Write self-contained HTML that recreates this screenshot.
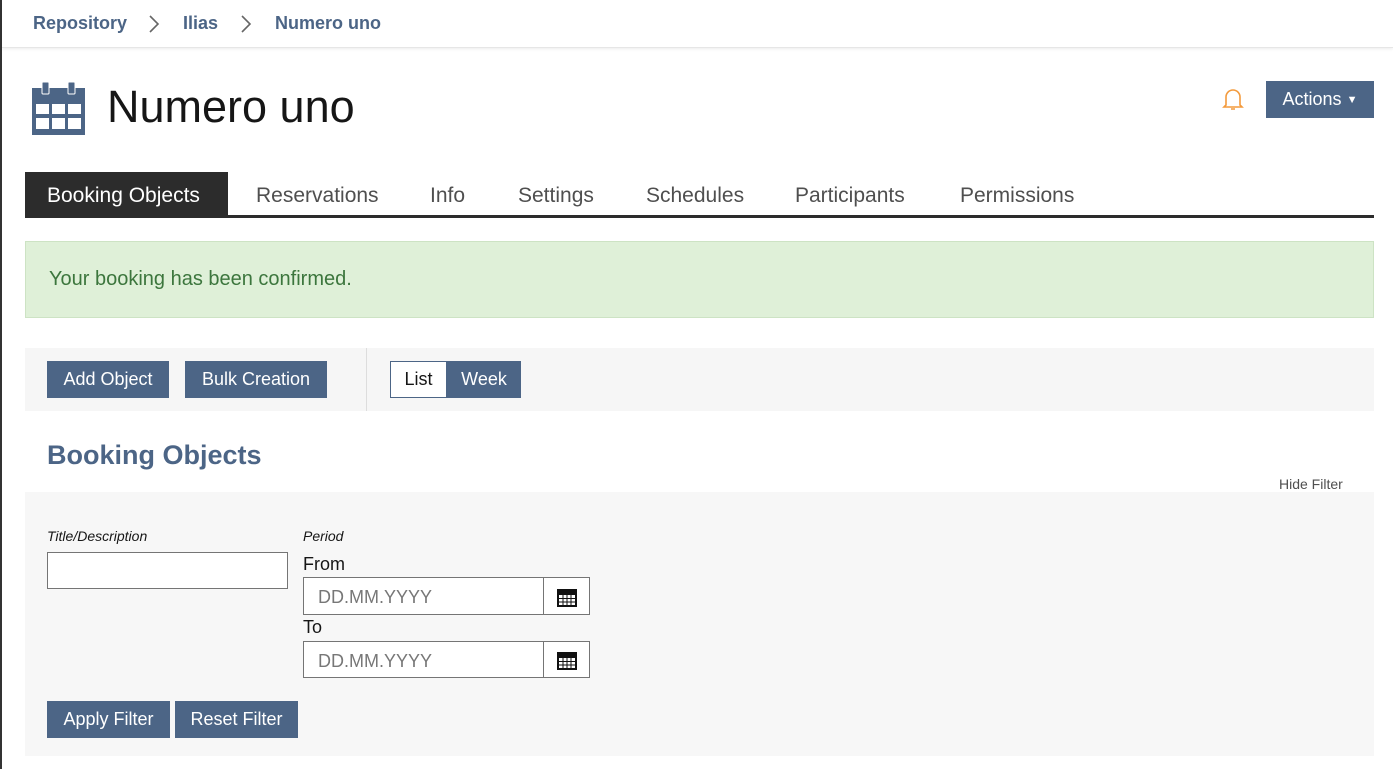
<!DOCTYPE html>
<html><head><style>
*{box-sizing:border-box;margin:0;padding:0}
body{width:1393px;height:769px;overflow:hidden;background:#fff;font-family:"Liberation Sans",sans-serif;position:relative;color:#161616}
.abs{position:absolute}
.lb{position:absolute;left:0;top:0;width:2px;height:769px;background:#333}
.bc{left:2px;top:0;width:1391px;height:48px;border-bottom:1px solid #e6e6e6;box-shadow:0 1px 3px rgba(0,0,0,.08);font-size:18px;color:#4c6586;font-weight:bold}
.bc span{position:absolute;top:13px}
.bc svg{position:absolute;top:14px}
.btn{position:absolute;background:#4c6586;color:#fff;font-size:18px;display:flex;align-items:center;justify-content:center}
.tab{position:absolute;top:184px;font-size:21px;color:#4f4f4f}
.inp{position:absolute;background:#fff;border:1px solid #757575}
.cal{position:absolute;width:46px;height:37px;border-left:1px solid #757575;right:0;top:0;display:flex;align-items:center;justify-content:center}
</style></head><body>
<div class="lb"></div>
<div class="abs bc">
<span style="left:31px">Repository</span>
<svg style="left:146px" width="12" height="20" viewBox="0 0 12 20"><path d="M2 2 L10 10 L2 18" fill="none" stroke="#666" stroke-width="1.6"/></svg>
<span style="left:181px">Ilias</span>
<svg style="left:238px" width="12" height="20" viewBox="0 0 12 20"><path d="M2 2 L10 10 L2 18" fill="none" stroke="#666" stroke-width="1.6"/></svg>
<span style="left:273px">Numero uno</span>
</div>
<svg class="abs" style="left:32px;top:82px" width="54" height="53" viewBox="0 0 54 53"><rect x="0" y="6" width="53" height="47" fill="#4c6586"/><rect x="10" y="0" width="7" height="12" rx="1" fill="#4c6586" stroke="#fff" stroke-width="1"/><rect x="36" y="0" width="7" height="12" rx="1" fill="#4c6586" stroke="#fff" stroke-width="1"/><g fill="#fff"><rect x="4" y="22" width="13" height="10"/><rect x="20" y="22" width="13" height="10"/><rect x="36" y="22" width="13" height="10"/><rect x="4" y="36" width="13" height="11"/><rect x="20" y="36" width="13" height="11"/><rect x="36" y="36" width="13" height="11"/></g></svg>
<div class="abs" style="left:107px;top:81px;font-size:45px;color:#161616">Numero uno</div>
<svg class="abs" style="left:1222px;top:88px" width="22" height="24" viewBox="0 0 22 24"><path d="M4 17 V9 a7 7 0 0 1 14 0 V17 l2 2 H2 z M9 21 h4" fill="none" stroke="#f39a3c" stroke-width="1.6"/></svg>
<div class="btn" style="left:1266px;top:81px;width:108px;height:37px">Actions&nbsp;<span style="font-size:11px">▼</span></div>
<div class="abs" style="left:25px;top:172px;width:203px;height:44px;background:#2c2c2c"></div>
<div class="tab" style="left:47px;color:#fff">Booking Objects</div>
<div class="tab" style="left:256px">Reservations</div>
<div class="tab" style="left:430px">Info</div>
<div class="tab" style="left:518px">Settings</div>
<div class="tab" style="left:646px">Schedules</div>
<div class="tab" style="left:795px">Participants</div>
<div class="tab" style="left:960px">Permissions</div>
<div class="abs" style="left:25px;top:215px;width:1349px;height:3px;background:#2c2c2c"></div>
<div class="abs" style="left:25px;top:241px;width:1349px;height:77px;background:#dff0d8;border:1px solid #cde3c4;color:#3c763d;font-size:20px;padding:26px 0 0 23px">Your booking has been confirmed.</div>
<div class="abs" style="left:25px;top:348px;width:1349px;height:63px;background:#f6f6f6"></div>
<div class="btn" style="left:47px;top:361px;width:122px;height:37px">Add Object</div>
<div class="btn" style="left:185px;top:361px;width:142px;height:37px">Bulk Creation</div>
<div class="abs" style="left:366px;top:348px;width:1px;height:63px;background:#ddd"></div>
<div class="abs" style="left:390px;top:361px;width:57px;height:37px;border:1px solid #4c6586;background:#fff;font-size:18px;display:flex;align-items:center;justify-content:center">List</div>
<div class="btn" style="left:447px;top:361px;width:74px;height:37px">Week</div>
<div class="abs" style="left:47px;top:440px;font-size:27px;color:#4c6586;font-weight:bold">Booking Objects</div>
<div class="abs" style="left:25px;top:492px;width:1349px;height:264px;background:#f7f7f7"></div>
<div class="abs" style="left:1279px;top:476px;font-size:14px;color:#4f4f4f">Hide Filter</div>
<div class="abs" style="left:47px;top:528px;font-size:14px;font-style:italic">Title/Description</div>
<div class="inp" style="left:47px;top:552px;width:241px;height:37px"></div>
<div class="abs" style="left:303px;top:528px;font-size:14px;font-style:italic">Period</div>
<div class="abs" style="left:303px;top:554px;font-size:18px">From</div>
<div class="inp" style="left:303px;top:577px;width:287px;height:38px"><span style="position:absolute;left:14px;top:9px;font-size:18px;color:#777">DD.MM.YYYY</span><div class="cal"><svg width="20" height="20" viewBox="0 0 20 20"><rect x="0" y="2" width="20" height="18" fill="#111"/><g fill="#fff"><rect x="2" y="8" width="16" height="10"/></g><g fill="#111"><rect x="5.5" y="8" width="1" height="10"/><rect x="9.5" y="8" width="1" height="10"/><rect x="13.5" y="8" width="1" height="10"/><rect x="2" y="11" width="16" height="1"/><rect x="2" y="14.5" width="16" height="1"/></g></svg></div></div>
<div class="abs" style="left:303px;top:617px;font-size:18px">To</div>
<div class="inp" style="left:303px;top:641px;width:287px;height:37px"><span style="position:absolute;left:14px;top:9px;font-size:18px;color:#777">DD.MM.YYYY</span><div class="cal" style="height:35px"><svg width="20" height="20" viewBox="0 0 20 20"><rect x="0" y="2" width="20" height="18" fill="#111"/><g fill="#fff"><rect x="2" y="8" width="16" height="10"/></g><g fill="#111"><rect x="5.5" y="8" width="1" height="10"/><rect x="9.5" y="8" width="1" height="10"/><rect x="13.5" y="8" width="1" height="10"/><rect x="2" y="11" width="16" height="1"/><rect x="2" y="14.5" width="16" height="1"/></g></svg></div></div>
<div class="btn" style="left:47px;top:701px;width:123px;height:37px">Apply Filter</div>
<div class="btn" style="left:175px;top:701px;width:123px;height:37px">Reset Filter</div>
</body></html>
